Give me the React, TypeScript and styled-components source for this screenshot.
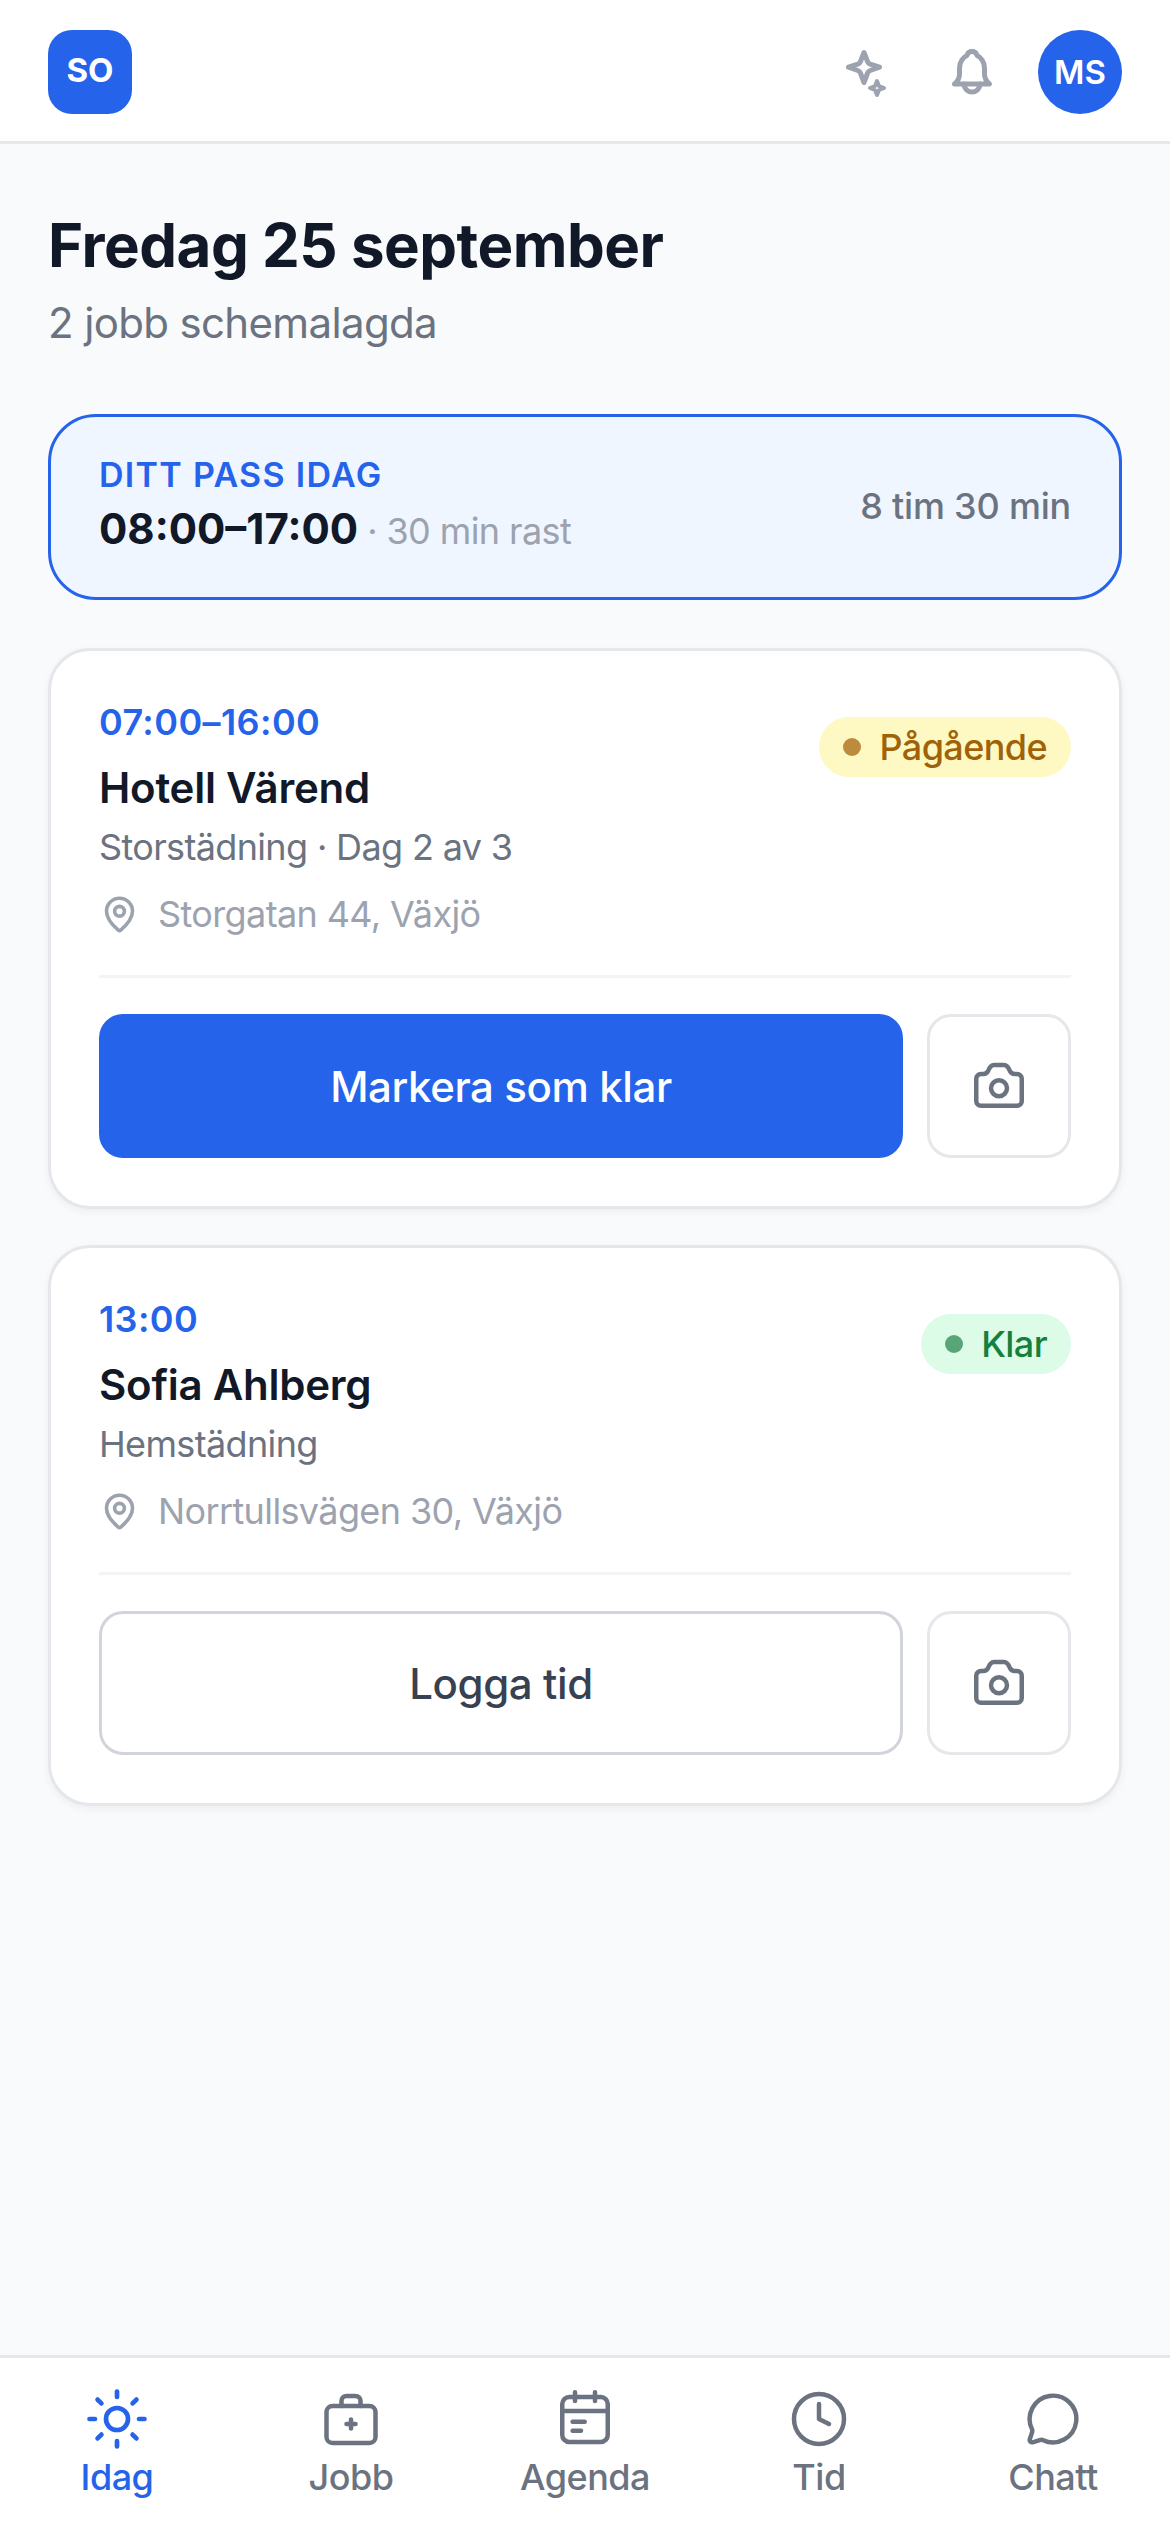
import React from "react";
import styled, { createGlobalStyle } from "styled-components";
import { Clock, MapPin, MessageCircle, Sun } from "lucide-react";

const GlobalStyle = createGlobalStyle`
  html, body {
    margin: 0;
    padding: 0;
    background: #f9fafb;
    font-family: Inter, "Liberation Sans", sans-serif;
  }
  * { box-sizing: border-box; }
`;

const Page = styled.div`
  width: 1170px;
  height: 2532px;
  display: flex;
  flex-direction: column;
  background: #f9fafb;
`;

const Header = styled.header`
  height: 144px;
  flex: none;
  display: flex;
  align-items: center;
  justify-content: space-between;
  padding: 3px 48px 0;
  background: #fff;
  border-bottom: 3px solid #e5e7eb;
`;

const Logo = styled.div`
  width: 84px;
  height: 84px;
  padding-bottom: 4px;
  border-radius: 24px;
  background: #2563eb;
  color: #fff;
  font-size: 33px;
  font-weight: 700;
  display: flex;
  align-items: center;
  justify-content: center;
`;

const HeaderActions = styled.div`
  display: flex;
  align-items: center;
  gap: 48px;
`;

const IconButton = styled.div`
  width: 60px;
  height: 60px;
  color: #9ca3af;
`;

const Avatar = styled.div`
  width: 84px;
  height: 84px;
  margin-left: -12px;
  border-radius: 50%;
  background: #2563eb;
  color: #fff;
  font-size: 33px;
  font-weight: 600;
  display: flex;
  align-items: center;
  justify-content: center;
`;

const Main = styled.main`
  flex: 1;
  padding: 62px 48px 0;
`;

const Title = styled.h1`
  margin: 0;
  font-size: 60px;
  line-height: 78px;
  font-weight: 700;
  letter-spacing: -0.5px;
  color: #111827;
`;

const Subtitle = styled.p`
  margin: 12px 0 0;
  font-size: 42px;
  line-height: 54px;
  letter-spacing: -0.65px;
  color: #6b7280;
`;

const ShiftCard = styled.section`
  margin-top: 64px;
  height: 186px;
  padding: 0 48px 2px;
  display: flex;
  align-items: center;
  justify-content: space-between;
  background: #eff6ff;
  border: 3px solid #2563eb;
  border-radius: 48px;
`;

const ShiftLabel = styled.div`
  font-size: 34px;
  line-height: 42px;
  font-weight: 600;
  letter-spacing: 1.3px;
  color: #2563eb;
`;

const ShiftTimes = styled.div`
  margin-top: 6px;
  display: flex;
  align-items: baseline;
  font-size: 42px;
  line-height: 54px;
  font-weight: 700;
  color: #111827;
`;

const ShiftBreak = styled.span`
  margin-left: 9px;
  font-size: 36px;
  font-weight: 400;
  letter-spacing: -0.6px;
  color: #9ca3af;
`;

const ShiftTotal = styled.div`
  font-size: 36px;
  font-weight: 500;
  letter-spacing: -0.2px;
  color: #6b7280;
`;

const JobCard = styled.article`
  margin-top: 48px;
  padding: 50px 48px 48px;
  background: #fff;
  border: 3px solid #e5e7eb;
  border-radius: 42px;
  box-shadow: 0 3px 9px rgba(0, 0, 0, 0.05);

  & + & {
    margin-top: 36px;
  }
`;

const JobTop = styled.div`
  display: flex;
  justify-content: space-between;
  align-items: flex-start;
`;

const JobTime = styled.div`
  font-size: 36px;
  line-height: 42px;
  font-weight: 600;
  letter-spacing: 0.4px;
  color: #2563eb;
`;

const JobName = styled.h2`
  margin: 18px 0 0;
  font-size: 42px;
  line-height: 54px;
  font-weight: 600;
  letter-spacing: -0.25px;
  color: #111827;
`;

const JobKind = styled.div`
  margin-top: 8px;
  font-size: 36px;
  line-height: 48px;
  letter-spacing: -0.65px;
  color: #6b7280;
`;

const JobPlace = styled.div`
  margin-top: 16px;
  padding-left: 1px;
  display: flex;
  align-items: center;
  gap: 19px;
  font-size: 36px;
  line-height: 54px;
  letter-spacing: -0.62px;
  color: #9ca3af;
`;

const Badge = styled.div<{ $tone: "amber" | "green" }>`
  margin-top: 16px;
  height: 60px;
  padding: 0 24px;
  display: flex;
  align-items: center;
  gap: 18px;
  border-radius: 30px;
  font-size: 36px;
  font-weight: 500;
  letter-spacing: -0.6px;
  background: ${(p) => (p.$tone === "amber" ? "#fef9c3" : "#dcfce7")};
  color: ${(p) => (p.$tone === "amber" ? "#a16207" : "#15803d")};
`;

const BadgeDot = styled.span<{ $tone: "amber" | "green" }>`
  width: 18px;
  height: 18px;
  border-radius: 50%;
  background: ${(p) => (p.$tone === "amber" ? "#bd8b3d" : "#5aa577")};
`;

const Divider = styled.hr`
  margin: 34px 0 36px;
  height: 3px;
  border: 0;
  background: #f3f4f6;
`;

const ActionRow = styled.div`
  display: flex;
  gap: 24px;
`;

const ActionButton = styled.button<{ $primary?: boolean }>`
  flex: 1;
  height: 144px;
  padding: 0;
  border-radius: 24px;
  font-family: inherit;
  font-size: 42px;
  font-weight: 500;
  letter-spacing: -0.4px;
  border: ${(p) => (p.$primary ? "0" : "3px solid #d1d5db")};
  background: ${(p) => (p.$primary ? "#2563eb" : "#fff")};
  color: ${(p) => (p.$primary ? "#fff" : "#374151")};
`;

const CameraButton = styled.button`
  width: 144px;
  height: 144px;
  flex: none;
  padding: 0;
  display: flex;
  align-items: center;
  justify-content: center;
  border: 3px solid #e5e7eb;
  border-radius: 24px;
  background: #fff;
  color: #6b7280;
`;

const TabBar = styled.nav`
  height: 177px;
  flex: none;
  display: grid;
  grid-template-columns: repeat(5, 1fr);
  background: #fff;
  border-top: 3px solid #e5e7eb;
`;

const Tab = styled.div<{ $active?: boolean }>`
  padding-top: 28px;
  display: flex;
  flex-direction: column;
  align-items: center;
  color: ${(p) => (p.$active ? "#2563eb" : "#6b7280")};
`;

const TabIcon = styled.div`
  height: 66px;
  display: flex;
  align-items: center;
  justify-content: center;
`;

const TabLabel = styled.span`
  margin-top: 4px;
  font-size: 36px;
  line-height: 42px;
  font-weight: 500;
  letter-spacing: -0.5px;
`;

const SparkleIcon = () => (
  <svg width="60" height="60" viewBox="834 42 60 60" fill="none" stroke="currentColor" strokeLinecap="round" strokeLinejoin="round">
    <path strokeWidth="5" d="M864 52.5l3.5 9q.8 2 2.7 2.7l9.3 3-9.3 3.3q-1.9.7-2.7 2.7l-3.5 9.3-3.5-9.3q-.8-2-2.7-2.7l-9.3-3.3 9.3-3q1.9-.7 2.7-2.7z" />
    <path strokeWidth="4" d="M877 81l2 5 5 2-5 2-2 5-2-5-5-2 5-2z" />
  </svg>
);

const BellIcon = () => (
  <svg width="60" height="60" viewBox="942 42 60 60" fill="none" stroke="currentColor" strokeWidth="5" strokeLinecap="round" strokeLinejoin="round">
    <path d="M954.5 84c2.5-2 5-5.5 5-10v-6c0-6.5 4-11 7.5-12.5.6-2.5 2.5-4 5-4s4.4 1.5 5 4c3.5 1.5 7.5 6 7.5 12.5v6c0 4.500 2.500 8 5 10z" />
    <path d="M964 84a8 8 0 0 0 16 0" />
  </svg>
);

const CameraIcon = () => (
  <svg width="60" height="60" viewBox="0 0 60 60" fill="none" stroke="currentColor" strokeWidth="4.5" strokeLinecap="round" strokeLinejoin="round">
    <path d="M12 18h2.500c2 0 3.500-1 4.500-2.800C20.300 11.700 22 9 25 9h10c3 0 4.700 2.700 6 6.200 1 1.800 2.500 2.800 4.500 2.800H48a4.750 4.750 0 0 1 4.750 4.750V45A4.750 4.750 0 0 1 48 49.750H12A4.750 4.750 0 0 1 7.250 45V22.750A4.750 4.750 0 0 1 12 18z" />
    <circle cx="30" cy="32.300" r="8" />
  </svg>
);

const JobbIcon = () => (
  <svg width="66" height="66" viewBox="0 0 66 66" fill="none" stroke="currentColor" strokeWidth="4.5" strokeLinecap="round" strokeLinejoin="round">
    <rect x="8.500" y="20" width="49" height="37" rx="6" />
    <path d="M23.500 20v-5a5 5 0 0 1 5-5h9a5 5 0 0 1 5 5v5" />
    <path d="M33 33.500v9M28.500 38h9" />
  </svg>
);

const AgendaIcon = () => (
  <svg width="66" height="66" viewBox="0 0 66 66" fill="none" stroke="currentColor" strokeWidth="4.5" strokeLinecap="round" strokeLinejoin="round">
    <rect x="10.250" y="11" width="45.500" height="45" rx="7" />
    <path d="M23 6.250V15M43 6.250V15M10.250 25h45.500M20.600 35.700h12.100M20.600 44.700H29" />
  </svg>
);

const JOBS = [
  {
    time: "07:00–16:00",
    name: "Hotell Värend",
    kind: "Storstädning · Dag 2 av 3",
    place: "Storgatan 44, Växjö",
    status: "Pågående",
    tone: "amber" as const,
    action: "Markera som klar",
    primary: true,
  },
  {
    time: "13:00",
    name: "Sofia Ahlberg",
    kind: "Hemstädning",
    place: "Norrtullsvägen 30, Växjö",
    status: "Klar",
    tone: "green" as const,
    action: "Logga tid",
    primary: false,
  },
];

export default function App() {
  return (
    <Page>
      <GlobalStyle />
      <Header>
        <Logo>SO</Logo>
        <HeaderActions>
          <IconButton>
            <SparkleIcon />
          </IconButton>
          <IconButton>
            <BellIcon />
          </IconButton>
          <Avatar>MS</Avatar>
        </HeaderActions>
      </Header>

      <Main>
        <Title>Fredag 25 september</Title>
        <Subtitle>2 jobb schemalagda</Subtitle>

        <ShiftCard>
          <div>
            <ShiftLabel>DITT PASS IDAG</ShiftLabel>
            <ShiftTimes>
              08:00–17:00
              <ShiftBreak>· 30 min rast</ShiftBreak>
            </ShiftTimes>
          </div>
          <ShiftTotal>8 tim 30 min</ShiftTotal>
        </ShiftCard>

        {JOBS.map((job) => (
          <JobCard key={job.name}>
            <JobTop>
              <div>
                <JobTime>{job.time}</JobTime>
                <JobName>{job.name}</JobName>
              </div>
              <Badge $tone={job.tone}>
                <BadgeDot $tone={job.tone} />
                {job.status}
              </Badge>
            </JobTop>
            <JobKind>{job.kind}</JobKind>
            <JobPlace>
              <MapPin size={39} strokeWidth={2.2} />
              {job.place}
            </JobPlace>
            <Divider />
            <ActionRow>
              <ActionButton $primary={job.primary}>{job.action}</ActionButton>
              <CameraButton>
                <CameraIcon />
              </CameraButton>
            </ActionRow>
          </JobCard>
        ))}
      </Main>

      <TabBar>
        <Tab $active>
          <TabIcon>
            <Sun size={66} strokeWidth={1.7} />
          </TabIcon>
          <TabLabel>Idag</TabLabel>
        </Tab>
        <Tab>
          <TabIcon>
            <JobbIcon />
          </TabIcon>
          <TabLabel>Jobb</TabLabel>
        </Tab>
        <Tab>
          <TabIcon>
            <AgendaIcon />
          </TabIcon>
          <TabLabel>Agenda</TabLabel>
        </Tab>
        <Tab>
          <TabIcon>
            <Clock size={60} strokeWidth={1.8} />
          </TabIcon>
          <TabLabel>Tid</TabLabel>
        </Tab>
        <Tab>
          <TabIcon>
            <MessageCircle size={56} strokeWidth={1.9} />
          </TabIcon>
          <TabLabel>Chatt</TabLabel>
        </Tab>
      </TabBar>
    </Page>
  );
}
